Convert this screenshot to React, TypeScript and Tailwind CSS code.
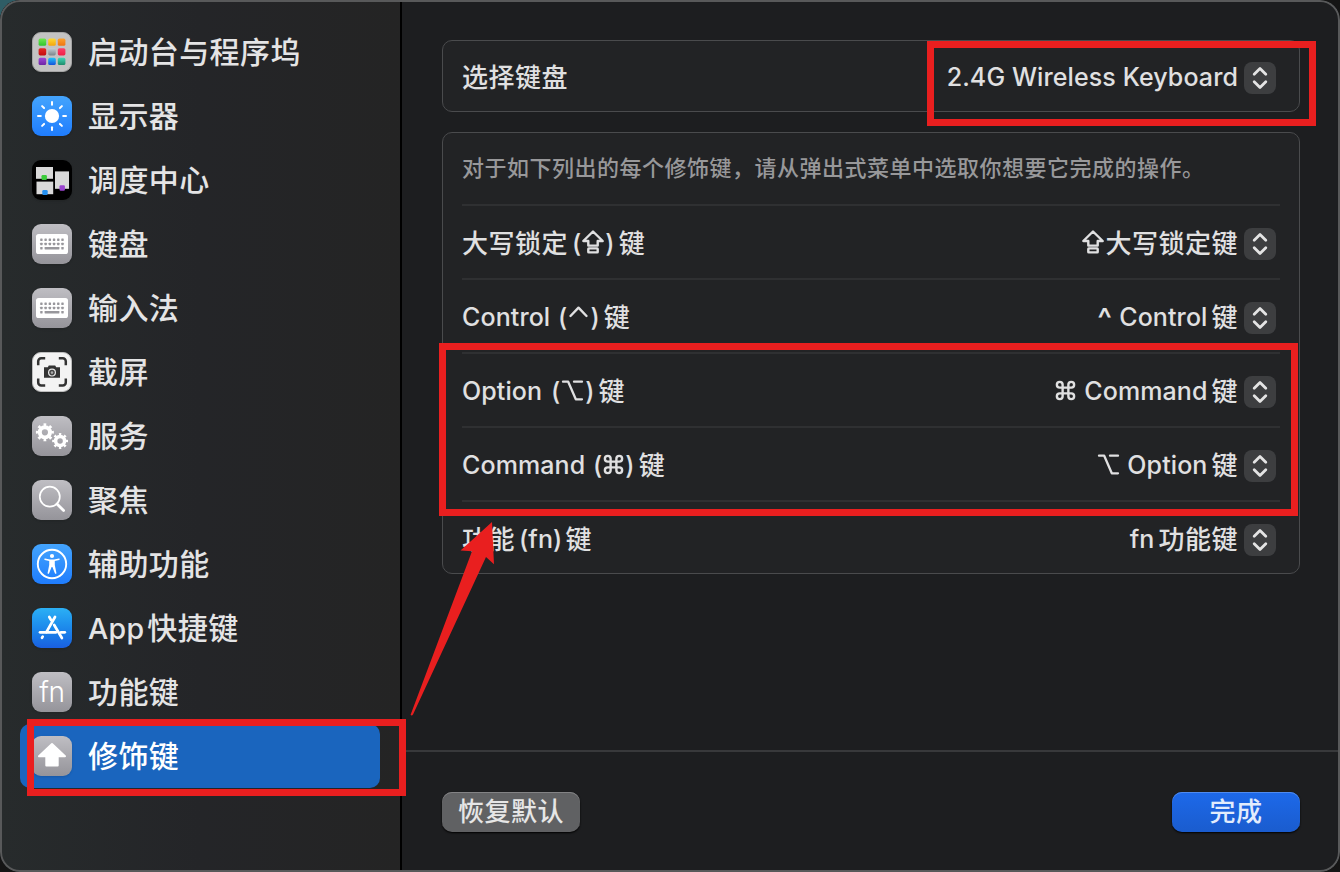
import { useState } from "react";
import type { ReactNode } from "react";
import { Command } from "lucide-react";

const GRAY = "bg-gradient-to-b from-[#bfbec3] to-[#95949a]";
const BLUE = "bg-gradient-to-b from-[#44a4fd] to-[#1f7cfd]";

const Svg = ({ children }: { children: ReactNode }) => (
  <svg viewBox="0 0 40 40" className="w-10 h-10" fill="none">
    {children}
  </svg>
);

const LaunchpadIcon = () => {
  const tiles = [
    ["#6fe84f", "#2fc52d"],
    ["#fdd835", "#f5a50c"],
    ["#fba02c", "#ef7411"],
    ["#e52a25", "#c20d12"],
    ["#c4cdd3", "#7b868c"],
    ["#fd3f68", "#ee2148"],
    ["#a046d8", "#6d24a5"],
    ["#22c3fb", "#1552da"],
    ["#3fd6b4", "#1f8c6c"],
  ];
  return (
    <Svg>
      <defs>
        {tiles.map(([a, b], i) => (
          <linearGradient key={i} id={`tile${i}`} x1="0" y1="0" x2="0" y2="1">
            <stop offset="0" stopColor={a} />
            <stop offset="1" stopColor={b} />
          </linearGradient>
        ))}
      </defs>
      {tiles.map((_, i) => (
        <rect
          key={i}
          x={6.6 + (i % 3) * 9.6}
          y={6.6 + Math.floor(i / 3) * 9.6}
          width="7.6"
          height="7.2"
          rx="1.6"
          fill={`url(#tile${i})`}
        />
      ))}
    </Svg>
  );
};

const DisplayIcon = () => (
  <Svg>
    <circle cx="20" cy="20" r="7.1" fill="#fff" />
    {[0, 45, 90, 135, 180, 225, 270, 315].map((deg) => (
      <path
        key={deg}
        d="M20 6v2.8"
        stroke="#fff"
        strokeWidth="2"
        strokeLinecap="round"
        transform={`rotate(${deg} 20 20)`}
      />
    ))}
  </Svg>
);

const MissionIcon = () => (
  <Svg>
    <rect x="4" y="7" width="17" height="11.8" fill="#d9d9d9" />
    <rect x="4.5" y="21.6" width="16.7" height="12.6" fill="#d9d9d9" />
    <rect x="23" y="11.4" width="14" height="17.4" fill="#d9d9d9" />
    <rect x="9.5" y="15" width="5.4" height="5" rx="1.2" fill="#3ccc3b" />
    <rect x="10.3" y="30" width="5.4" height="5" rx="1.2" fill="#2591f2" />
    <rect x="27.5" y="25.2" width="5.4" height="5.6" rx="1.2" fill="#9a44cf" />
  </Svg>
);

const KeyboardIcon = () => (
  <Svg>
    <rect x="4" y="10" width="32" height="20" rx="2.6" fill="#fff" />
    {[0, 1, 2, 3, 4, 5].map((c) => (
      <g key={c} fill="#98979c">
        <rect x={8.2 + c * 4.22} y="14.5" width="2.4" height="2.4" rx="0.4" />
        <rect x={8.2 + c * 4.22} y="18.8" width="2.4" height="2.4" rx="0.4" />
      </g>
    ))}
    <g fill="#98979c">
      <rect x="8.2" y="23" width="2.4" height="2.4" rx="0.4" />
      <rect x="12.6" y="23" width="14.8" height="2.4" rx="0.4" />
      <rect x="29.3" y="23" width="2.4" height="2.4" rx="0.4" />
    </g>
  </Svg>
);

const ScreenshotIcon = () => (
  <Svg>
    <path
      d="M6.2 13.2V9.2a3 3 0 0 1 3-3h4M26.8 6.2h4a3 3 0 0 1 3 3v4M33.8 26.4v4a3 3 0 0 1-3 3h-4M13.2 33.4h-4a3 3 0 0 1-3-3v-4"
      stroke="#333"
      strokeWidth="2.5"
    />
    <path d="M12 15.2h3.8l1-1.6h6.4l1 1.6H28v10.6H12z" fill="#333" />
    <circle cx="20" cy="20.6" r="3.4" stroke="#e8e8e8" strokeWidth="1.2" fill="#444" />
    <circle cx="20" cy="20.6" r="1.3" fill="#aaa" />
  </Svg>
);

const Gear = ({ cx, cy, s }: { cx: number; cy: number; s: number }) => (
  <g transform={`translate(${cx} ${cy}) scale(${s})`} stroke="#fff">
    <circle r="5.1" strokeWidth="4" />
    <circle r="7.6" strokeWidth="2.8" pathLength="16" strokeDasharray="0.9 1.1" strokeDashoffset="0.45" />
  </g>
);

const ServicesIcon = () => (
  <Svg>
    <Gear cx={12.9} cy={16.3} s={1} />
    <Gear cx={28.1} cy={25} s={0.88} />
  </Svg>
);

const SpotlightIcon = () => (
  <Svg>
    <circle cx="17.8" cy="16.7" r="10" stroke="#fff" strokeWidth="1.7" />
    <path d="M25 24l6.6 6.6" stroke="#fff" strokeWidth="2.8" strokeLinecap="round" />
  </Svg>
);

const AccessibilityIcon = () => (
  <Svg>
    <circle cx="20" cy="20" r="14.2" stroke="#fff" strokeWidth="1.9" />
    <circle cx="20" cy="12" r="2.1" fill="#fff" />
    <path
      d="M13 14.6l5 .9h4l5-.9c.9-.1 1 1.1.2 1.3l-4.4 1v4l1.6 8c.1 1-1.2 1.2-1.5.3L20.4 23h-.8l-2.5 6.2c-.3.9-1.6.7-1.5-.3l1.6-8v-4l-4.4-1c-.8-.2-.7-1.4.2-1.3z"
      fill="#fff"
    />
  </Svg>
);

const AppStoreIcon = () => (
  <Svg>
    <g stroke="#fff" strokeWidth="2.7" strokeLinecap="round">
      <path d="M23 9l-8.6 15.2" />
      <path d="M17.3 9l1.8 3.2" />
      <path d="M22.2 17l7.7 13" />
      <path d="M8 24.3h16" />
      <path d="M29 24.3h3.8" />
      <path d="M10.7 28.6l-.7 1.2" />
    </g>
  </Svg>
);

const FnIcon = () => (
  <span className="block h-10 leading-[41px] text-center text-white text-[28px] font-light tracking-[-0.3px] font-['Inter',sans-serif]">
    fn
  </span>
);

const ModifierIcon = () => (
  <Svg>
    <path
      d="M20 8L7 20.3h7.3v9.2h11.4v-9.2H33z"
      fill="#fff"
      stroke="#fff"
      strokeWidth="2"
      strokeLinejoin="round"
    />
  </Svg>
);

const menu = [
  { label: "启动台与程序坞", icon: <LaunchpadIcon />, bg: "bg-[#c3c3c3] border border-[#a5a5a5]" },
  { label: "显示器", icon: <DisplayIcon />, bg: BLUE },
  { label: "调度中心", icon: <MissionIcon />, bg: "bg-black" },
  { label: "键盘", icon: <KeyboardIcon />, bg: GRAY },
  { label: "输入法", icon: <KeyboardIcon />, bg: GRAY },
  { label: "截屏", icon: <ScreenshotIcon />, bg: "bg-[#f3f3f3] border border-[#bdbdbd]" },
  { label: "服务", icon: <ServicesIcon />, bg: GRAY },
  { label: "聚焦", icon: <SpotlightIcon />, bg: GRAY },
  { label: "辅助功能", icon: <AccessibilityIcon />, bg: BLUE },
  { label: "App快捷键", icon: <AppStoreIcon />, bg: "bg-gradient-to-b from-[#2cb0f5] to-[#1a5fe0]" },
  { label: "功能键", icon: <FnIcon />, bg: GRAY },
  { label: "修饰键", icon: <ModifierIcon />, bg: GRAY },
];

const En = ({ children }: { children: ReactNode }) => (
  <span className="pt-0.5 font-['Inter',sans-serif] text-[25px] tracking-[0.1px] whitespace-pre">{children}</span>
);

// Key symbols
const Caps = () => (
  <svg viewBox="0 0 24 26" className="w-6 h-[26px]" fill="none" stroke="currentColor" strokeWidth="2.4" strokeLinejoin="round">
    <path d="M12 2.5L2.3 12h5v4.6h9.4V12h5z" />
    <rect x="7.3" y="19.4" width="9.4" height="4" rx="0.5" />
  </svg>
);

const Ctrl = () => (
  <svg viewBox="0 0 23 26" className="w-[23px] h-[26px]" fill="none" stroke="currentColor" strokeWidth="2.4" strokeLinecap="round" strokeLinejoin="round">
    <path d="M3.500 13l8-8.300 8 8.300" />
  </svg>
);

const Opt = () => (
  <svg viewBox="0 0 25 26" className="w-[25px] h-[26px]" fill="none" stroke="currentColor" strokeWidth="2.3" strokeLinecap="round" strokeLinejoin="round">
    <path d="M3 4.700h5.200l7.600 17.600H22M14 4.700h8" />
  </svg>
);

const Cmd = () => <Command size={23} strokeWidth={2.5} />;

const Gap = () => <i className="w-1" />;

const rows = [
  {
    left: <>大写锁定<Gap /><En>(</En><Caps /><En>)</En><Gap />键</>,
    right: <><Caps />大写锁定键</>,
  },
  {
    left: <><En>Control </En><i className="w-px" /><En>(</En><Ctrl /><En>)</En><Gap />键</>,
    right: (
      <>
        <span className="mt-1 font-['Inter',sans-serif] text-[31px] leading-none">^</span>
        <En> Control</En><Gap />键
      </>
    ),
  },
  {
    left: <><En>Option </En><i className="w-0.5" /><En>(</En><Opt /><En>)</En><Gap />键</>,
    right: <><Cmd /><En> Command</En><Gap />键</>,
  },
  {
    left: <><En>Command </En><i className="w-px" /><En>(</En><Cmd /><En>)</En><Gap />键</>,
    right: <><Opt /><En> Option</En><Gap />键</>,
  },
  {
    left: <>功能<Gap /><En>(fn)</En><i className="w-[3px]" />键</>,
    right: <><En>fn</En><Gap />功能键</>,
  },
];

const Stepper = () => (
  <button className="w-8 h-8 mt-1 rounded-lg bg-[#3d3e40]">
    <svg viewBox="0 0 32 32" className="w-8 h-8" fill="none" stroke="#e4e4e4" strokeWidth="2.8" strokeLinecap="round" strokeLinejoin="round">
      <path d="M10.200 12.200L16 6.400l5.800 5.800M10.200 19.800l5.800 5.800 5.800-5.800" />
    </svg>
  </button>
);

const Text = ({ children }: { children: ReactNode }) => (
  <div className="flex items-center text-[26px] leading-9 tracking-[0.5px] text-[#e0e0e1]">{children}</div>
);

const App = () => {
  const [active, setActive] = useState("修饰键");

  return (
    <div className="relative w-[1340px] h-[872px] overflow-hidden bg-[#151515] font-['Noto_Sans_CJK_SC',sans-serif] font-medium">
      <div className="absolute top-0 left-0 w-6 h-6 bg-[#2f5d66]" />
      <div className="relative flex w-full h-full rounded-[20px] overflow-hidden bg-[#1d1e20]">
        {/* Sidebar */}
        <div className="w-[402px] h-full pt-5 px-5 border-r-2 border-black bg-gradient-to-r from-[#272b2c] via-[#242528] to-[#242424]">
          {menu.map((item) => (
            <div
              key={item.label}
              onClick={() => setActive(item.label)}
              className={`flex items-center gap-4 h-16 w-[360px] px-3 rounded-[10px] ${
                active === item.label ? "bg-[#1a65be] text-white" : "text-[#e4e4e5]"
              }`}
            >
              <div className={`w-10 h-10 rounded-[9px] overflow-hidden shadow-sm ${item.bg}`}>
                {item.bg.includes("border") ? <div className="-m-px">{item.icon}</div> : item.icon}
              </div>
              <div className="flex items-center pb-1 text-[30px] leading-10 tracking-[0.4px]">
                {item.label.startsWith("App") ? (
                  <>
                    <span className="pt-1.5 mr-[3px] font-['Inter',sans-serif] text-[28.5px] tracking-[0.3px]">App</span>
                    {item.label.slice(3)}
                  </>
                ) : (
                  item.label
                )}
              </div>
            </div>
          ))}
        </div>

        {/* Content */}
        <div className="flex-1 flex flex-col">
          <div className="h-[750px] px-10 pt-10">
            <div className="flex items-center justify-between h-[72px] pl-[19px] pr-[23px] border border-[#4a4b4d] rounded-[10px] bg-[#222325]">
              <Text>选择键盘</Text>
              <div className="flex items-center gap-1.5">
                <Text><En>2.4G Wireless Keyboard</En></Text>
                <Stepper />
              </div>
            </div>

            <div className="mt-5 h-[442px] px-[19px] border border-[#4a4b4d] rounded-[10px] bg-[#222325]">
              <p className="h-[71px] leading-[66px] text-[22px] tracking-[0.5px] text-[#98989a] whitespace-nowrap">
                对于如下列出的每个修饰键，请从弹出式菜单中选取你想要它完成的操作。
              </p>
              {rows.map((row, i) => (
                <div key={i} className="flex items-center justify-between h-[74px] pr-1 border-t-2 border-[#2f3032]">
                  <Text>{row.left}</Text>
                  <div className="flex items-center gap-1.5">
                    <Text>{row.right}</Text>
                    <Stepper />
                  </div>
                </div>
              ))}
            </div>
          </div>

          {/* Footer */}
          <div className="flex-1 flex items-start justify-between px-10 pt-10 border-t-2 border-[#38393b]">
            <button className="w-[138px] h-10 pb-1 rounded-[10px] bg-[#606163] text-[#e6e6e6] text-[26px] leading-9 tracking-[0.5px] shadow-[inset_0_1px_0_#838385,0_1px_2px_#000]">
              恢复默认
            </button>
            <button className="w-32 h-10 pb-1 rounded-[10px] bg-gradient-to-b from-[#1d69ea] to-[#1a5cce] text-[#e2ecfc] text-[26px] leading-9 tracking-[0.5px] shadow-[inset_0_1px_0_#4f8bf0,0_1px_2px_#000]">
              完成
            </button>
          </div>
        </div>

        {/* Window outline */}
        <div className="absolute inset-0 rounded-[20px] border-2 border-[#58595a] pointer-events-none" />
      </div>

      {/* Highlights */}
      <div className="absolute left-[927px] top-[41px] w-[389px] h-[85px] border-[7px] border-[#e91f1f] pointer-events-none" />
      <div className="absolute left-[439px] top-[343px] w-[859px] h-[173px] border-[7px] border-[#e91f1f] pointer-events-none" />
      <div className="absolute left-[27px] top-[719px] w-[379px] h-[77px] border-[7px] border-[#e91f1f] pointer-events-none" />
      <svg viewBox="0 0 110 215" className="absolute left-[400px] top-[510px] w-[110px] h-[215px] pointer-events-none">
        <path
          d="M92 12L94 54.200 86 47 13 204.500q-1.200 1.600-2.400.300L72 41.200 60.500 40.600z"
          fill="#e91f1f"
        />
      </svg>
    </div>
  );
};

export default App;
